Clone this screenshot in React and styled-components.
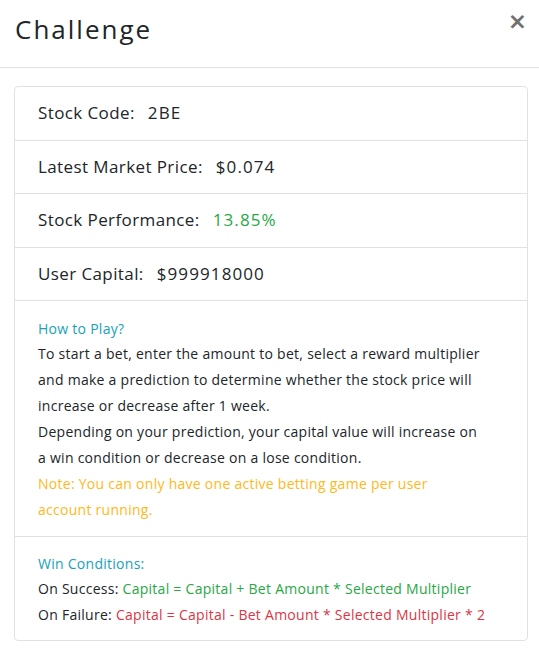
import styled, { createGlobalStyle } from "styled-components";

const GlobalStyle = createGlobalStyle`
    body {
        margin: 0;
        background: #fff;
        font-family: "Open Sans", "Liberation Sans", sans-serif;
        color: #212529;
    }
`;

const Modal = styled.div`
    width: 539px;
    min-height: 652px;
    background: #fff;
`;

const Header = styled.div`
    display: flex;
    align-items: flex-start;
    justify-content: space-between;
    height: 68px;
    box-sizing: border-box;
    padding: 10px 12px 0 15px;
    border-bottom: 1px solid #dee2e6;
`;

const Title = styled.h2`
    margin: 0;
    font-size: 26px;
    font-weight: 400;
    line-height: 38px;
    letter-spacing: 2px;
    color: #212529;
`;

const Close = styled.button`
    border: 0;
    background: none;
    padding: 0;
    margin-top: 0;
    font-family: "DejaVu Sans", sans-serif;
    font-size: 23px;
    font-weight: 700;
    line-height: 1;
    color: #707070;
    cursor: pointer;
`;

const Body = styled.div`
    padding: 18px 11px 12px 14px;
`;

const Card = styled.div`
    border: 1px solid #dee2e6;
    border-radius: 4px;
`;

const Row = styled.div`
    display: flex;
    gap: 13px;
    padding: 13px 23px;
    font-size: 17px;
    line-height: 26.5px;
    letter-spacing: 0.4px;
    border-bottom: 1px solid #dee2e6;
`;

const Value = styled.span`
    letter-spacing: 1.1px;
    color: ${(p) => p.$color || "#212529"};
`;

const Section = styled.div`
    padding: ${(p) => p.$pad};
    font-size: 14px;
    line-height: 26px;
    letter-spacing: 0.27px;
    border-bottom: ${(p) => (p.$last ? "0" : "1px solid #dee2e6")};
`;

const Heading = styled.div`
    line-height: 24px;
    color: #17a2b8;
`;

const Paragraph = styled.div`
    color: ${(p) => p.$color || "#212529"};
`;

const Text = styled.span`
    color: ${(p) => p.$color};
`;

export default function App() {
    return (
        <Modal>
            <GlobalStyle />
            <Header>
                <Title>Challenge</Title>
                <Close aria-label="Close">×</Close>
            </Header>
            <Body>
                <Card>
                    <Row>
                        <span>Stock Code:</span>
                        <Value>2BE</Value>
                    </Row>
                    <Row>
                        <span>Latest Market Price:</span>
                        <Value>$0.074</Value>
                    </Row>
                    <Row>
                        <span>Stock Performance:</span>
                        <Value $color="#28a745">13.85%</Value>
                    </Row>
                    <Row>
                        <span>User Capital:</span>
                        <Value>$999918000</Value>
                    </Row>
                    <Section $pad="16px 23px 13px">
                        <Heading>How to Play?</Heading>
                        <Paragraph>
                            To start a bet, enter the amount to bet, select a reward multiplier
                            <br />
                            and make a prediction to determine whether the stock price will
                            <br />
                            increase or decrease after 1 week.
                            <br />
                            Depending on your prediction, your capital value will increase on
                            <br />
                            a win condition or decrease on a lose condition.
                        </Paragraph>
                        <Paragraph $color="#ffb820">
                            Note: You can only have one active betting game per user
                            <br />
                            account running.
                        </Paragraph>
                    </Section>
                    <Section $pad="15px 23px 12px" $last>
                        <Heading>Win Conditions:</Heading>
                        <Paragraph>
                            On Success:{" "}
                            <Text $color="#28a745">
                                Capital = Capital + Bet Amount * Selected Multiplier
                            </Text>
                        </Paragraph>
                        <Paragraph>
                            On Failure:{" "}
                            <Text $color="#dc3545">
                                Capital = Capital - Bet Amount * Selected Multiplier * 2
                            </Text>
                        </Paragraph>
                    </Section>
                </Card>
            </Body>
        </Modal>
    );
}
